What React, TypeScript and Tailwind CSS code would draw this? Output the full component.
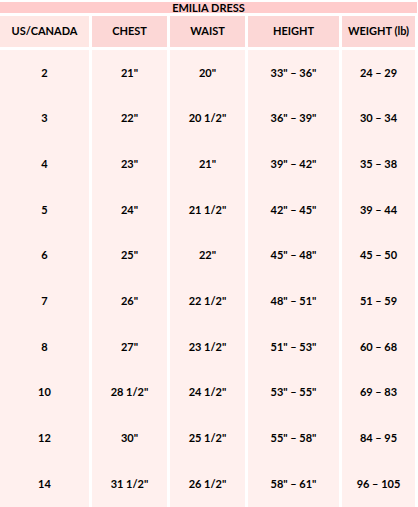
import React from "react";

const rows = [
  ["2", "21\"", "20\"", "33\" – 36\"", "24 – 29"],
  ["3", "22\"", "20 1/2\"", "36\" – 39\"", "30 – 34"],
  ["4", "23\"", "21\"", "39\" – 42\"", "35 – 38"],
  ["5", "24\"", "21 1/2\"", "42\" – 45\"", "39 – 44"],
  ["6", "25\"", "22\"", "45\" – 48\"", "45 – 50"],
  ["7", "26\"", "22 1/2\"", "48\" – 51\"", "51 – 59"],
  ["8", "27\"", "23 1/2\"", "51\" – 53\"", "60 – 68"],
  ["10", "28 1/2\"", "24 1/2\"", "53\" – 55\"", "69 – 83"],
  ["12", "30\"", "25 1/2\"", "55\" – 58\"", "84 – 95"],
  ["14", "31 1/2\"", "26 1/2\"", "58\" – 61\"", "96 – 105"],
];

const headers = ["US/CANADA", "CHEST", "WAIST", "HEIGHT", "WEIGHT (lb)"];

export default function App() {
  return (
    <div
      className="w-[418px] h-[507px] bg-white overflow-hidden text-[11px] font-bold text-black flex flex-col pt-[2px] gap-[3px]"
      style={{ fontFamily: "Lato, 'Open Sans', sans-serif" }}
    >
      <div className="h-[11px] w-[417px] bg-[#ffcccc] flex items-center justify-center leading-none">
        EMILIA DRESS
      </div>
      <div className="grid grid-cols-[89px_75px_75px_91px_73px] gap-x-[3px] h-[31px]">
        {headers.map((h, i) => (
          <div
            key={h}
            className={`flex items-center justify-center ${i === 0 ? "bg-[#fee7e4]" : "bg-[#fcd7d6]"}`}
          >
            {h}
          </div>
        ))}
      </div>
      <div className="grid grid-cols-[89px_75px_75px_91px_73px] gap-x-[3px] grid-rows-10 h-[457px]">
        {rows.map((r) =>
          r.map((c, j) => (
            <div key={r[0] + j} className="flex items-center justify-center bg-[#fff0ee]">
              {c}
            </div>
          ))
        )}
      </div>
    </div>
  );
}
